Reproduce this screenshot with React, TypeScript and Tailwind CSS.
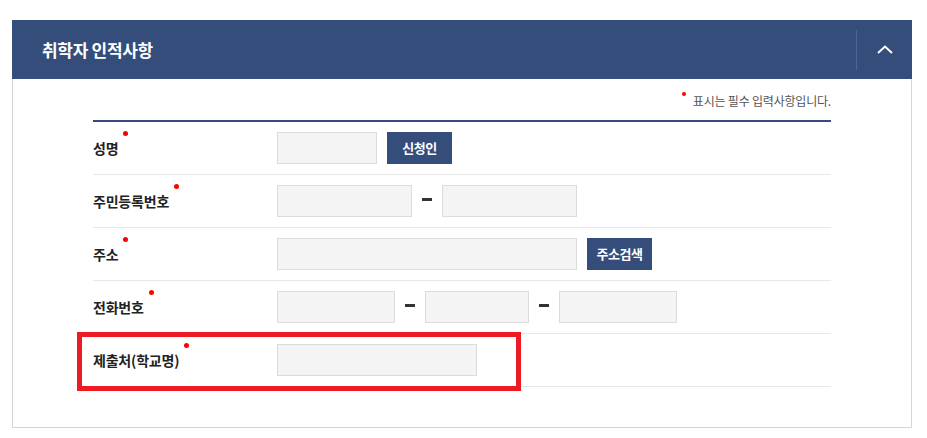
import { ReactNode } from "react";

const font = { fontFamily: '"Noto Sans CJK KR", "Noto Sans", sans-serif' };

function Input({ w }: { w: string }) {
  return <input type="text" className={`${w} h-[32px] bg-[#f4f4f4] border border-[#dcdcdc] outline-none`} />;
}

function Dash() {
  return (
    <span className="w-[30px] flex justify-center">
      <span className="block w-[10px] h-[3px] bg-[#333] -translate-y-[2px]" />
    </span>
  );
}

function NavyButton({ children }: { children: ReactNode }) {
  return (
    <button className="ml-[10px] h-[32px] w-[65px] bg-[#344d7a] text-white text-[13px] font-bold tracking-[-0.5px]">
      {children}
    </button>
  );
}

function Row({ label, children, highlight }: { label: string; children: ReactNode; highlight?: boolean }) {
  return (
    <div className="relative flex items-center h-[53px] border-b border-[#e8e8e8]">
      <div className="w-[184px] flex items-center">
        <span className="text-[14px] font-bold text-[#222] tracking-[-0.2px]">{label}</span>
        <span className="ml-[5px] w-[5px] h-[5px] rounded-full bg-[#f00] -translate-y-[15px]" />
      </div>
      <div className="flex items-center">{children}</div>
      {highlight && (
        <div className="absolute left-[-16px] top-[-2px] w-[444px] h-[59px] border-[5px] border-[#ed1c24]" />
      )}
    </div>
  );
}

export default function App() {
  return (
    <div className="w-[927px] h-[438px] bg-white pt-[20px] pl-[12px]" style={font}>
      <div className="w-[900px]">
        {/* header */}
        <div className="h-[59px] bg-[#344d7a] flex items-center justify-between">
          <h2 className="pl-[30px] text-white text-[17px] font-bold tracking-[-0.3px]">취학자 인적사항</h2>
          <div className="h-[40px] w-[56px] border-l border-[#4d6590] flex items-center justify-center">
            <svg width="16" height="9" viewBox="0 0 16 9" fill="none">
              <path d="M1 8 L8 1.5 L15 8" stroke="white" strokeWidth="2" />
            </svg>
          </div>
        </div>

        {/* body */}
        <div className="border border-t-0 border-[#d5d5d5] px-[80px] pt-[13px] pb-[40px]">
          <div className="h-[18px] mb-[10px] flex justify-end items-center">
            <span className="w-[4px] h-[4px] rounded-full bg-[#f00] -translate-y-[7px] mr-[7px]" />
            <span className="text-[12px] text-[#555] tracking-[-0.2px] leading-[18px]">표시는 필수 입력사항입니다.</span>
          </div>
          <div className="border-t-2 border-[#344d7a]">
            <Row label="성명">
              <Input w="w-[100px]" />
              <NavyButton>신청인</NavyButton>
            </Row>
            <Row label="주민등록번호">
              <Input w="w-[135px]" />
              <Dash />
              <Input w="w-[135px]" />
            </Row>
            <Row label="주소">
              <Input w="w-[300px]" />
              <NavyButton>주소검색</NavyButton>
            </Row>
            <Row label="전화번호">
              <Input w="w-[118px]" />
              <Dash />
              <Input w="w-[104px]" />
              <Dash />
              <Input w="w-[118px]" />
            </Row>
            <Row label="제출처(학교명)" highlight>
              <Input w="w-[200px]" />
            </Row>
          </div>
        </div>
      </div>
    </div>
  );
}
